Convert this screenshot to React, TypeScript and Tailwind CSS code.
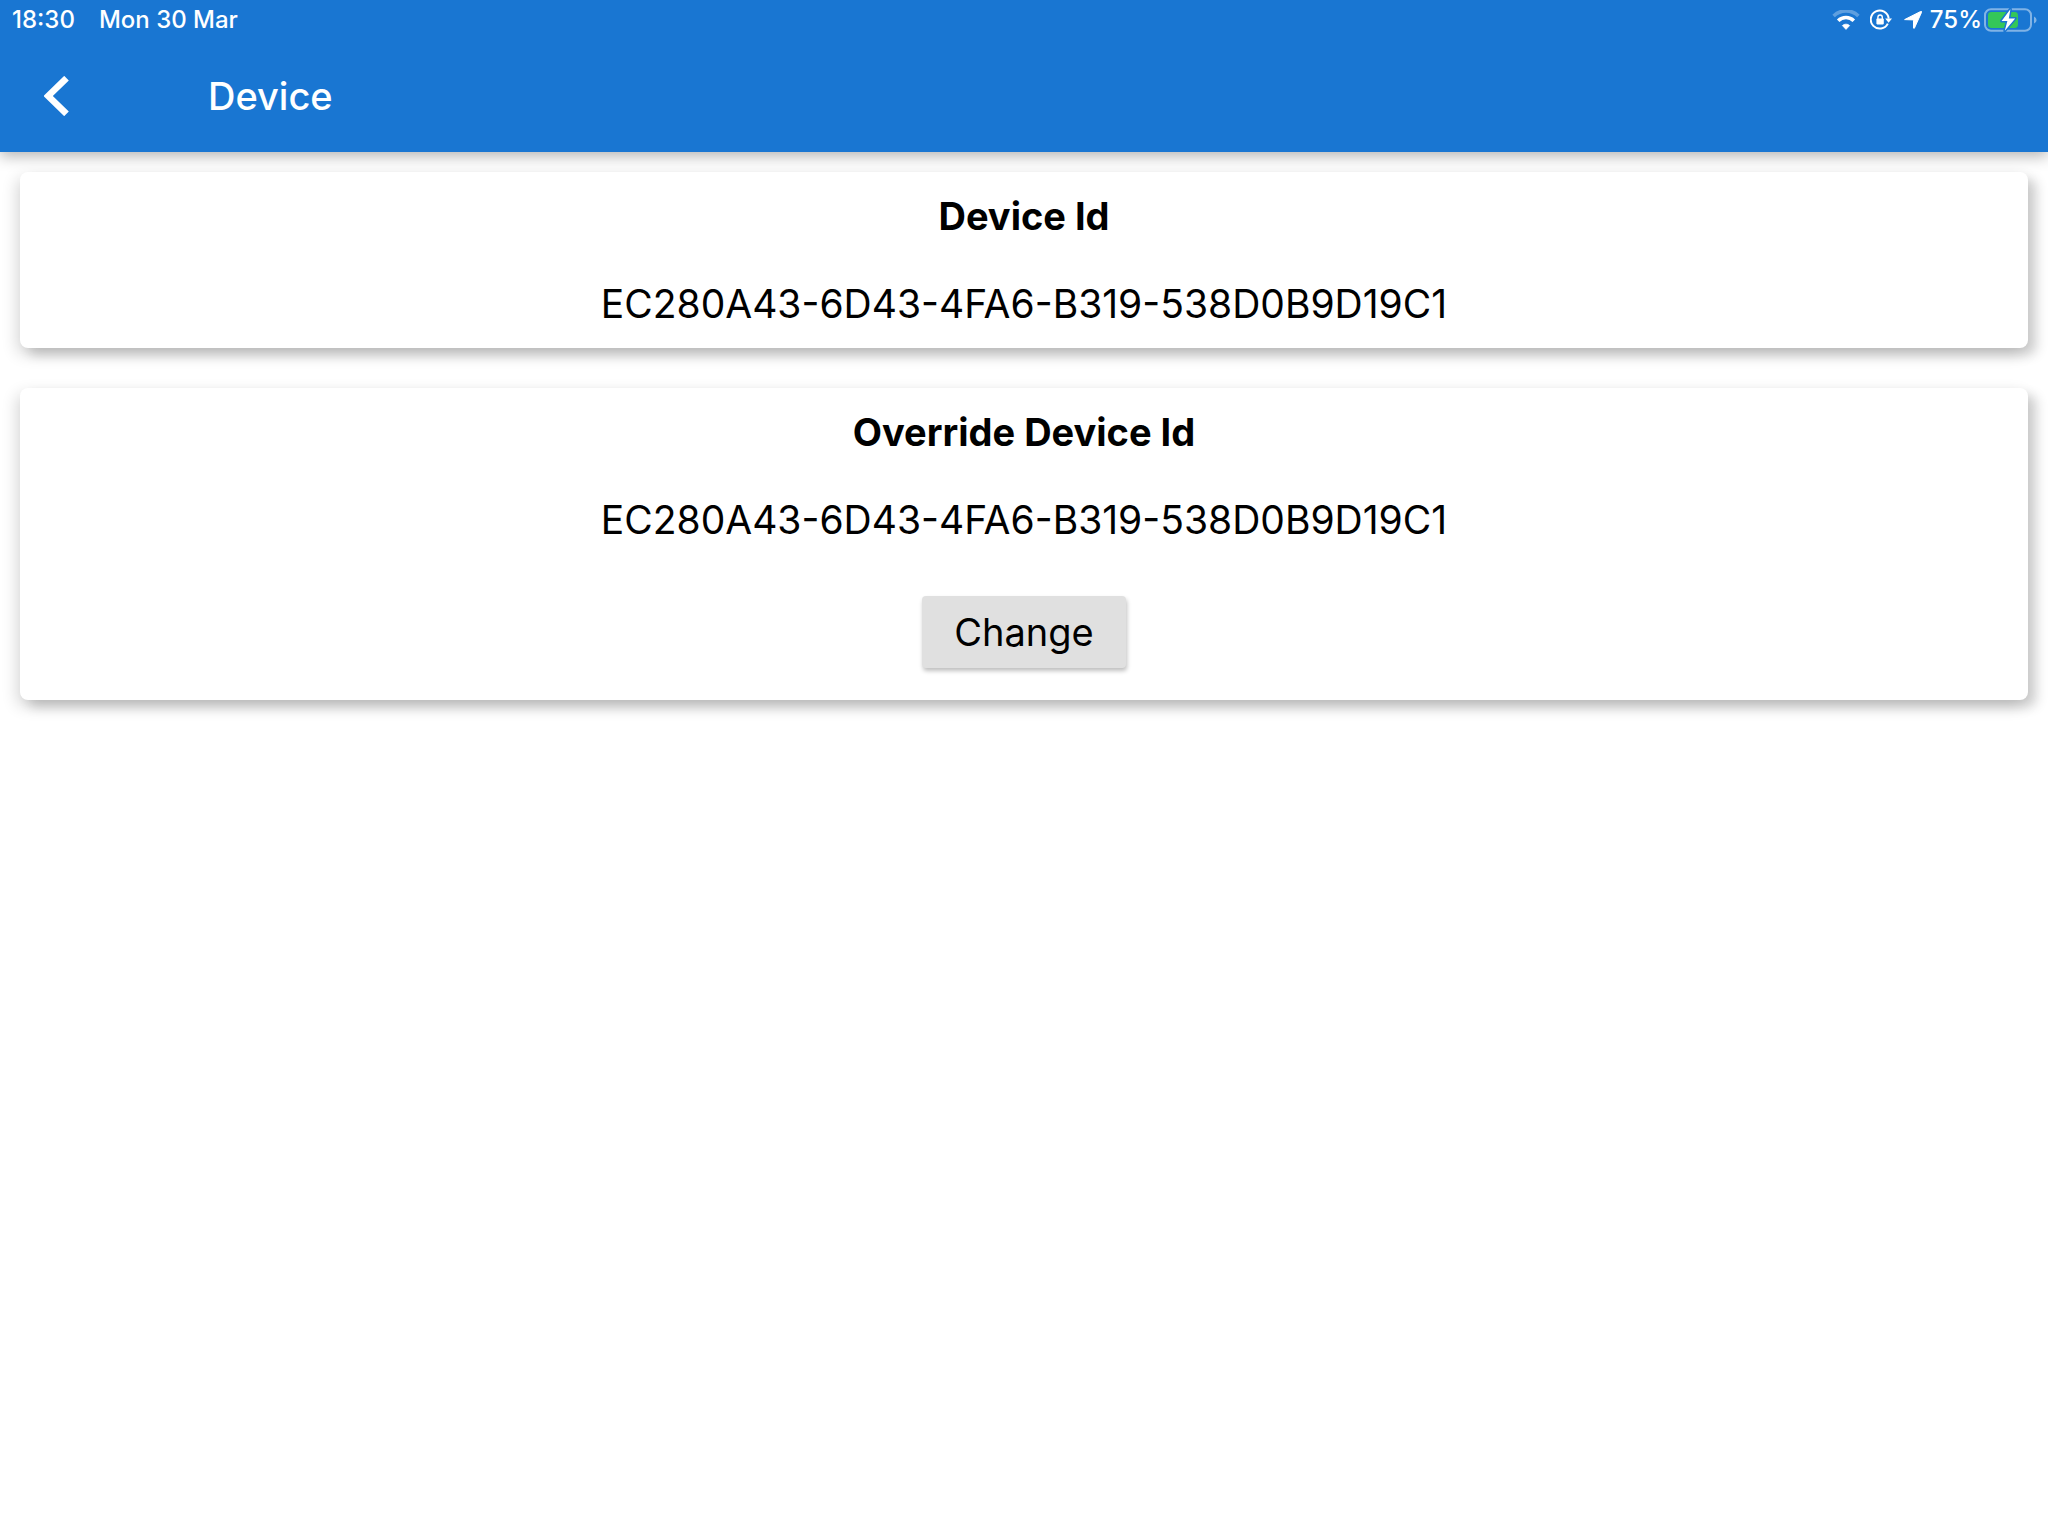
import type { ReactNode } from "react";

function WifiIcon() {
  return (
    <svg width="28" height="20" viewBox="0 0 28 20" fill="none" aria-hidden="true">
      <path d="M1.6 6A17.6 17.6 0 0 1 26.4 6" stroke="#fff" strokeOpacity="0.3" strokeWidth="3.6" />
      <path d="M6.2 10.8A11 11 0 0 1 21.8 10.8" stroke="#fff" strokeWidth="3.6" />
      <path d="M10.4 15.6A5.2 5.2 0 0 1 17.6 15.6L14 19.4Z" fill="#fff" stroke="#fff" strokeWidth="0.8" strokeLinejoin="round" />
    </svg>
  );
}

function RotationLockIcon() {
  return (
    <svg width="22" height="22" viewBox="0 0 22 22" fill="none" aria-hidden="true">
      <path d="M17.8 14.6A9 9 0 1 1 18.7 9.6" stroke="#fff" strokeWidth="2" />
      <path d="M15.2 9.4H22L18.6 13.8Z" fill="#fff" />
      <rect x="6.4" y="9.6" width="7.4" height="5.8" rx="0.8" fill="#fff" />
      <path d="M7.9 10V8.2a2.2 2.2 0 0 1 4.4 0V10" stroke="#fff" strokeWidth="1.4" />
    </svg>
  );
}

function LocationIcon() {
  return (
    <svg width="18" height="18" viewBox="0 0 18 18" aria-hidden="true">
      <path
        d="M0.6 8.6 16.6 0.5Q18 0 17.5 1.4L10.4 17.2Q10 17.8 9.5 17.1V9.3Q9.5 8.9 9 8.9Z"
        fill="#fff"
        stroke="#fff"
        strokeWidth="1"
        strokeLinejoin="round"
      />
    </svg>
  );
}

function BatteryIcon() {
  return (
    <svg width="54" height="24" viewBox="0 0 54 24" fill="none" aria-hidden="true">
      <rect x="1" y="1.2" width="46" height="21.6" rx="6" stroke="#fff" strokeOpacity="0.45" strokeWidth="2" />
      <path d="M50 8.4Q52.6 9.4 52.6 12T50 15.6Z" fill="#fff" fillOpacity="0.45" />
      <rect x="4" y="4" width="30" height="16" rx="3.4" fill="#34c759" />
      <path
        d="M26.4 1.2 17.6 13H23.4L20.8 22.8 31.2 10.4H24.8Z"
        fill="#fff"
        stroke="#1976d2"
        strokeWidth="3"
        paintOrder="stroke"
        strokeLinejoin="round"
      />
    </svg>
  );
}

function StatusBar() {
  return (
    <div className="flex h-10 items-center justify-between pr-2.5 pl-3 text-2xl font-medium">
      <div className="flex gap-6">
        <span>18:30</span>
        <span>Mon 30 Mar</span>
      </div>
      <div className="flex items-center">
        <WifiIcon />
        <span className="ml-2.5 flex">
          <RotationLockIcon />
        </span>
        <span className="ml-3 flex">
          <LocationIcon />
        </span>
        <span className="ml-2">75%</span>
        <span className="ml-0.5 flex">
          <BatteryIcon />
        </span>
      </div>
    </div>
  );
}

function Card({ title, children }: { title: string; children: ReactNode }) {
  return (
    <section className="flex flex-col items-center rounded-lg bg-white px-5 pt-5 shadow-[9px_7px_12px_rgba(0,0,0,0.16),-3px_6px_16px_rgba(0,0,0,0.16)]">
      <h2 className="text-[38px] leading-12 font-bold">{title}</h2>
      {children}
    </section>
  );
}

const DEVICE_ID = "EC280A43-6D43-4FA6-B319-538D0B9D19C1";

export default function App() {
  return (
    <div className="min-h-screen bg-white font-['Inter',sans-serif] text-black">
      <header className="bg-[#1976d2] text-white shadow-[0_4px_14px_rgba(0,0,0,0.3)]">
        <StatusBar />
        <div className="flex h-28 items-center pl-5">
          <button type="button" aria-label="Back" className="flex h-20 w-20 items-center pl-6">
            <svg width="25" height="40" viewBox="0 0 25 40" fill="none" aria-hidden="true">
              <path d="M22.5 2.2 4.2 20 22.5 37.8" stroke="#fff" strokeWidth="6.6" />
            </svg>
          </button>
          <h1 className="ml-27 text-[38px] leading-12 font-medium">Device</h1>
        </div>
      </header>
      <main className="flex flex-col gap-10 p-5">
        <Card title="Device Id">
          <p className="mt-10 pb-5 text-[39px] leading-12">{DEVICE_ID}</p>
        </Card>
        <Card title="Override Device Id">
          <p className="mt-10 text-[39px] leading-12">{DEVICE_ID}</p>
          <button
            type="button"
            className="mt-13 mb-8 h-18 rounded bg-[#e0e0e0] px-8 text-[38px] leading-12 shadow-[1px_3px_4px_rgba(0,0,0,0.25)]"
          >
            Change
          </button>
        </Card>
      </main>
    </div>
  );
}
